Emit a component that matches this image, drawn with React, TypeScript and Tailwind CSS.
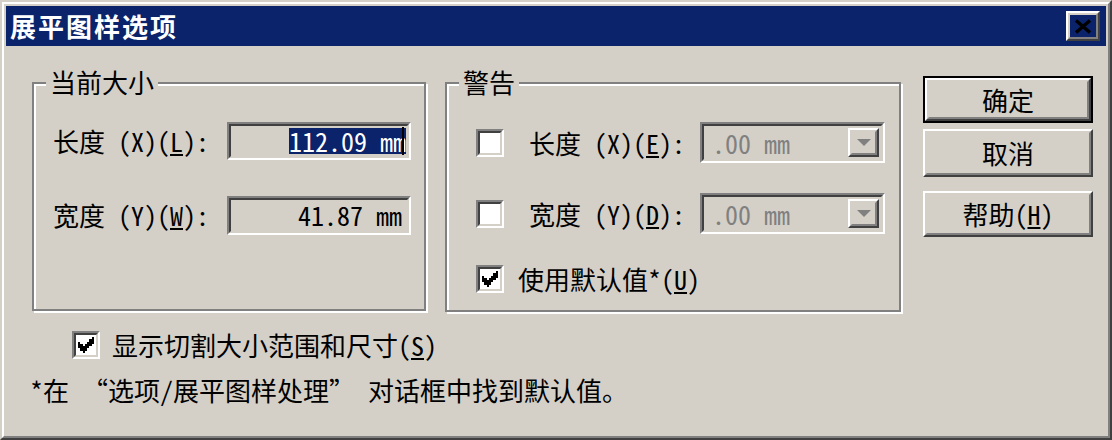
import React from "react";

const CHECK = ["......X", ".....XX", "X...XXX", "XX.XXX.", "XXXXX..", ".XXX...", "..X...."];

function CheckMark() {
  return (
    <svg width="16" height="16" viewBox="0 0 7 7" shapeRendering="crispEdges">
      {CHECK.map((row, y) =>
        row.split("").map((c, x) =>
          c === "X" ? <rect key={`${x}-${y}`} x={x} y={y} width="1" height="1" fill="#000" /> : null
        )
      )}
    </svg>
  );
}

function Checkbox({ checked }: { checked?: boolean }) {
  return (
    <div className="w-[28px] h-[28px] shrink-0 border-2 border-t-[#808080] border-l-[#808080] border-r-white border-b-white">
      <div className="w-full h-full border-2 border-t-[#404040] border-l-[#404040] border-r-[#d4d0c8] border-b-[#d4d0c8] bg-white flex items-center justify-center">
        {checked && <CheckMark />}
      </div>
    </div>
  );
}

function Raised({ className, children }: { className?: string; children?: React.ReactNode }) {
  return (
    <div className={`border-2 border-t-white border-l-white border-r-[#404040] border-b-[#404040] ${className ?? ""}`}>
      <div className="w-full h-full border-2 border-t-[#d4d0c8] border-l-[#d4d0c8] border-r-[#808080] border-b-[#808080] flex items-center justify-center">
        {children}
      </div>
    </div>
  );
}

function Sunken({ className, children }: { className?: string; children?: React.ReactNode }) {
  return (
    <div className={`border-2 border-t-[#808080] border-l-[#808080] border-r-white border-b-white ${className ?? ""}`}>
      <div className="w-full h-full border-2 border-t-[#404040] border-l-[#404040] border-r-[#d4d0c8] border-b-[#d4d0c8] flex items-center">
        {children}
      </div>
    </div>
  );
}

function Combo() {
  return (
    <Sunken className="w-[185px] h-[41px]">
      <span className="pl-[8px] text-[#808080]">.00 mm</span>
      <Raised className="ml-auto mr-[2px] w-[31px] h-[29px]">
        <svg width="14" height="8" viewBox="0 0 14 8">
          <polygon points="0,0 14,0 7,7" fill="#808080" />
        </svg>
      </Raised>
    </Sunken>
  );
}

function GroupBox({ title, className, children }: { title: string; className?: string; children?: React.ReactNode }) {
  return (
    <div className={`relative shrink-0 border-2 border-[#808080] shadow-[inset_2px_2px_0_#fff,2px_2px_0_#fff] ${className ?? ""}`}>
      <span className="absolute left-[12px] top-[-15px] px-[4px] bg-[#d4d0c8] leading-[26px]">{title}</span>
      {children}
    </div>
  );
}

export default function App() {
  return (
    <div className="w-[1112px] h-[440px] border-2 border-t-[#d4d0c8] border-l-[#d4d0c8] border-r-[#404040] border-b-[#404040] font-['Noto_Sans_Mono_CJK_SC','Noto_Sans_CJK_SC',sans-serif] text-[26px] leading-[26px] text-black">
      <div className="w-full h-full border-2 border-t-white border-l-white border-r-[#808080] border-b-[#808080] bg-[#d4d0c8] p-[2px] flex flex-col">
        {/* title bar */}
        <div className="h-[40px] shrink-0 bg-[#0a236a] flex items-center pl-[4px] pr-[6px]">
          <span className="text-white font-bold tracking-[2px]">展平图样选项</span>
          <Raised className="ml-auto w-[34px] h-[30px]">
            <svg width="18" height="15" viewBox="0 0 18 15">
              <path d="M2 1.5 L16 13.5 M16 1.5 L2 13.5" stroke="#000" strokeWidth="3.4" />
            </svg>
          </Raised>
        </div>

        {/* body */}
        <div className="flex pl-[26px] pt-[30px]">
          <div className="flex flex-col">
            <div className="flex mt-[6px]">
              <GroupBox title="当前大小" className="w-[394px] h-[229px]">
                <div className="flex flex-col pt-[38px] pl-[19px] gap-[36px]">
                  <div className="flex items-center h-[38px]">
                    <span className="w-[174px]">长度 (X)(<u className="underline-offset-2">L</u>):</span>
                    <Sunken className="w-[184px] h-[38px]">
                      <div className="ml-auto mr-[3px] flex items-center">
                        <span className="bg-[#0a236a] text-white">112.09 mm</span>
                        <span className="w-[2px] h-[28px] bg-black -ml-[4px]" />
                      </div>
                    </Sunken>
                  </div>
                  <div className="flex items-center h-[38px]">
                    <span className="w-[174px]">宽度 (Y)(<u className="underline-offset-2">W</u>):</span>
                    <Sunken className="w-[184px] h-[39px]">
                      <span className="ml-auto mr-[5px]">41.87 mm</span>
                    </Sunken>
                  </div>
                </div>
              </GroupBox>

              <GroupBox title="警告" className="ml-[19px] w-[456px] h-[230px]">
                <div className="flex flex-col pt-[38px] pl-[29px]">
                  <div className="flex items-center h-[41px]">
                    <Checkbox />
                    <span className="ml-[25px] w-[171px]">长度 (X)(<u className="underline-offset-2">E</u>):</span>
                    <Combo />
                  </div>
                  <div className="flex items-center h-[41px] mt-[30px]">
                    <Checkbox />
                    <span className="ml-[25px] w-[171px]">宽度 (Y)(<u className="underline-offset-2">D</u>):</span>
                    <Combo />
                  </div>
                  <div className="flex items-center h-[28px] mt-[31px]">
                    <Checkbox checked />
                    <span className="ml-[14px]">使用默认值*(<u className="underline-offset-2">U</u>)</span>
                  </div>
                </div>
              </GroupBox>
            </div>

            <div className="flex items-center mt-[19px] pl-[40px]">
              <Checkbox checked />
              <span className="ml-[12px]">显示切割大小范围和尺寸(<u className="underline-offset-2">S</u>)</span>
            </div>

            <div className="mt-[18px] -ml-[2px] whitespace-pre">*在 “选项/展平图样处理” 对话框中找到默认值。</div>
          </div>

          {/* buttons */}
          <div className="ml-[22px] w-[170px] flex flex-col">
            <div className="h-[47px] border-2 border-black">
              <Raised className="w-full h-full">确定</Raised>
            </div>
            <Raised className="mt-[6px] h-[48px]">取消</Raised>
            <Raised className="mt-[14px] h-[46px]">
              帮助(<u className="underline-offset-2">H</u>)
            </Raised>
          </div>
        </div>
      </div>
    </div>
  );
}
